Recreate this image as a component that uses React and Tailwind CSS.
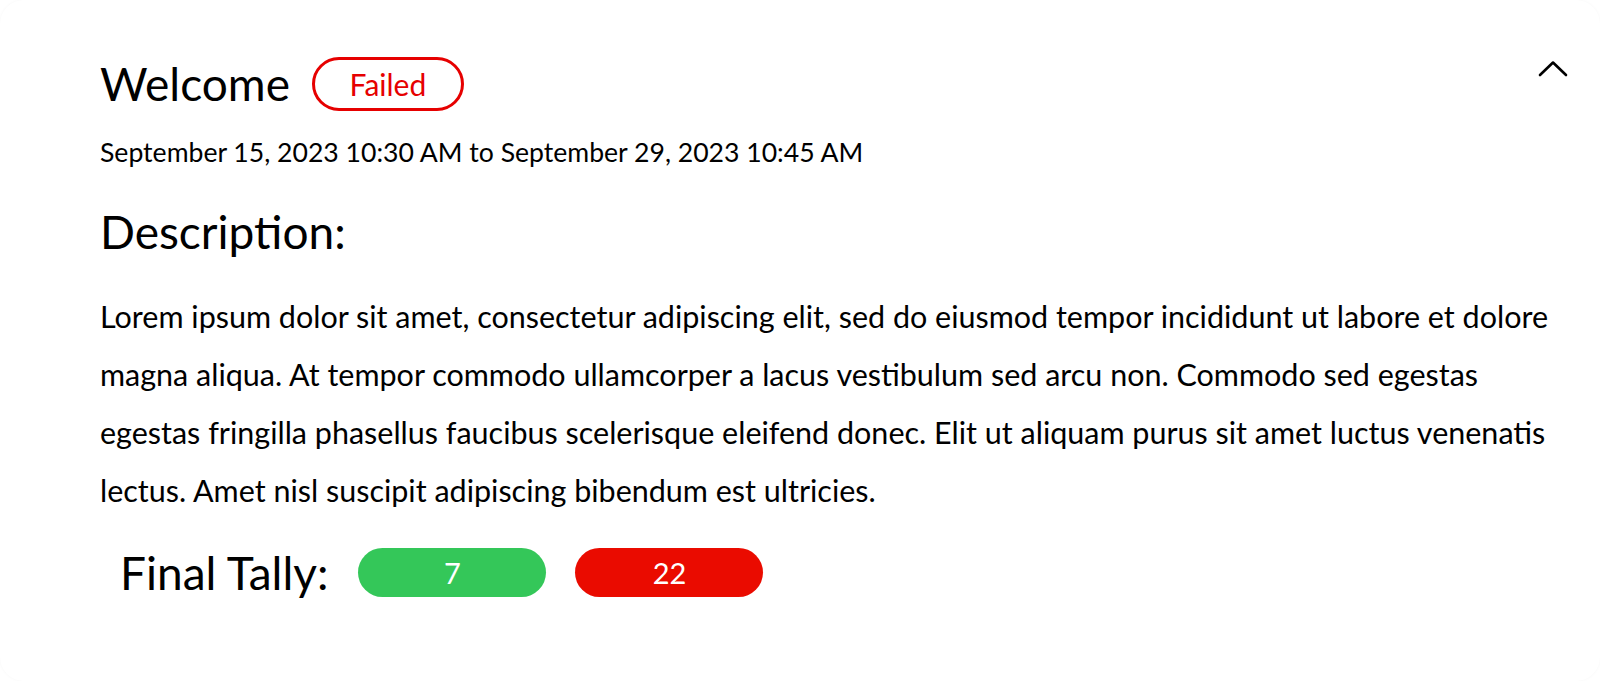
export default function App() {
  return (
    <div className="min-h-screen bg-white">
      <div className="relative h-[681px] w-full rounded-[24px] bg-white pl-[100px] pr-[40px] pt-[57px] font-['Lato',sans-serif] text-black shadow-[0_0_3px_rgba(0,0,0,0.04)]">
        <button
          type="button"
          aria-label="Collapse"
          className="absolute right-[31px] top-[58px] flex h-[20px] w-[32px] items-center justify-center"
        >
          <svg width="30" height="17" viewBox="0 0 30 17" fill="none">
            <polyline
              points="2,15 15,2.5 28,15"
              stroke="#000"
              strokeWidth="2.6"
              strokeLinecap="round"
              strokeLinejoin="round"
            />
          </svg>
        </button>

        <div className="flex items-center gap-[22px]">
          <h1 className="text-[46px] font-normal leading-none">Welcome</h1>
          <span className="flex h-[54px] w-[152px] items-center justify-center rounded-full border-[3px] border-[#e60000] text-[30px] text-[#e60000]">
            Failed
          </span>
        </div>

        <p className="mt-[25px] text-[26.6px] leading-[33px]">
          September 15, 2023 10:30 AM to September 29, 2023 10:45 AM
        </p>

        <h2 className="mt-[34px] text-[46px] font-normal leading-[58px]">Description:</h2>

        <p className="mt-[26px] text-[30.5px] leading-[58px]">
          Lorem ipsum dolor sit amet, consectetur adipiscing elit, sed do eiusmod tempor incididunt ut labore et dolore
          magna aliqua. At tempor commodo ullamcorper a lacus vestibulum sed arcu non. Commodo sed egestas egestas
          fringilla phasellus faucibus scelerisque eleifend donec. Elit ut aliquam purus sit amet luctus venenatis
          lectus. Amet nisl suscipit adipiscing bibendum est ultricies.
        </p>

        <div className="mt-[29px] flex items-center gap-[30px] pl-[20px]">
          <span className="text-[46px] leading-none">Final Tally:</span>
          <div className="flex items-center gap-[29px]">
            <span className="flex h-[49px] w-[188px] items-center justify-center rounded-full bg-[#34c759] text-[29px] text-white">
              7
            </span>
            <span className="flex h-[49px] w-[188px] items-center justify-center rounded-full bg-[#ea0b00] text-[29px] text-white">
              22
            </span>
          </div>
        </div>
      </div>
    </div>
  )
}
